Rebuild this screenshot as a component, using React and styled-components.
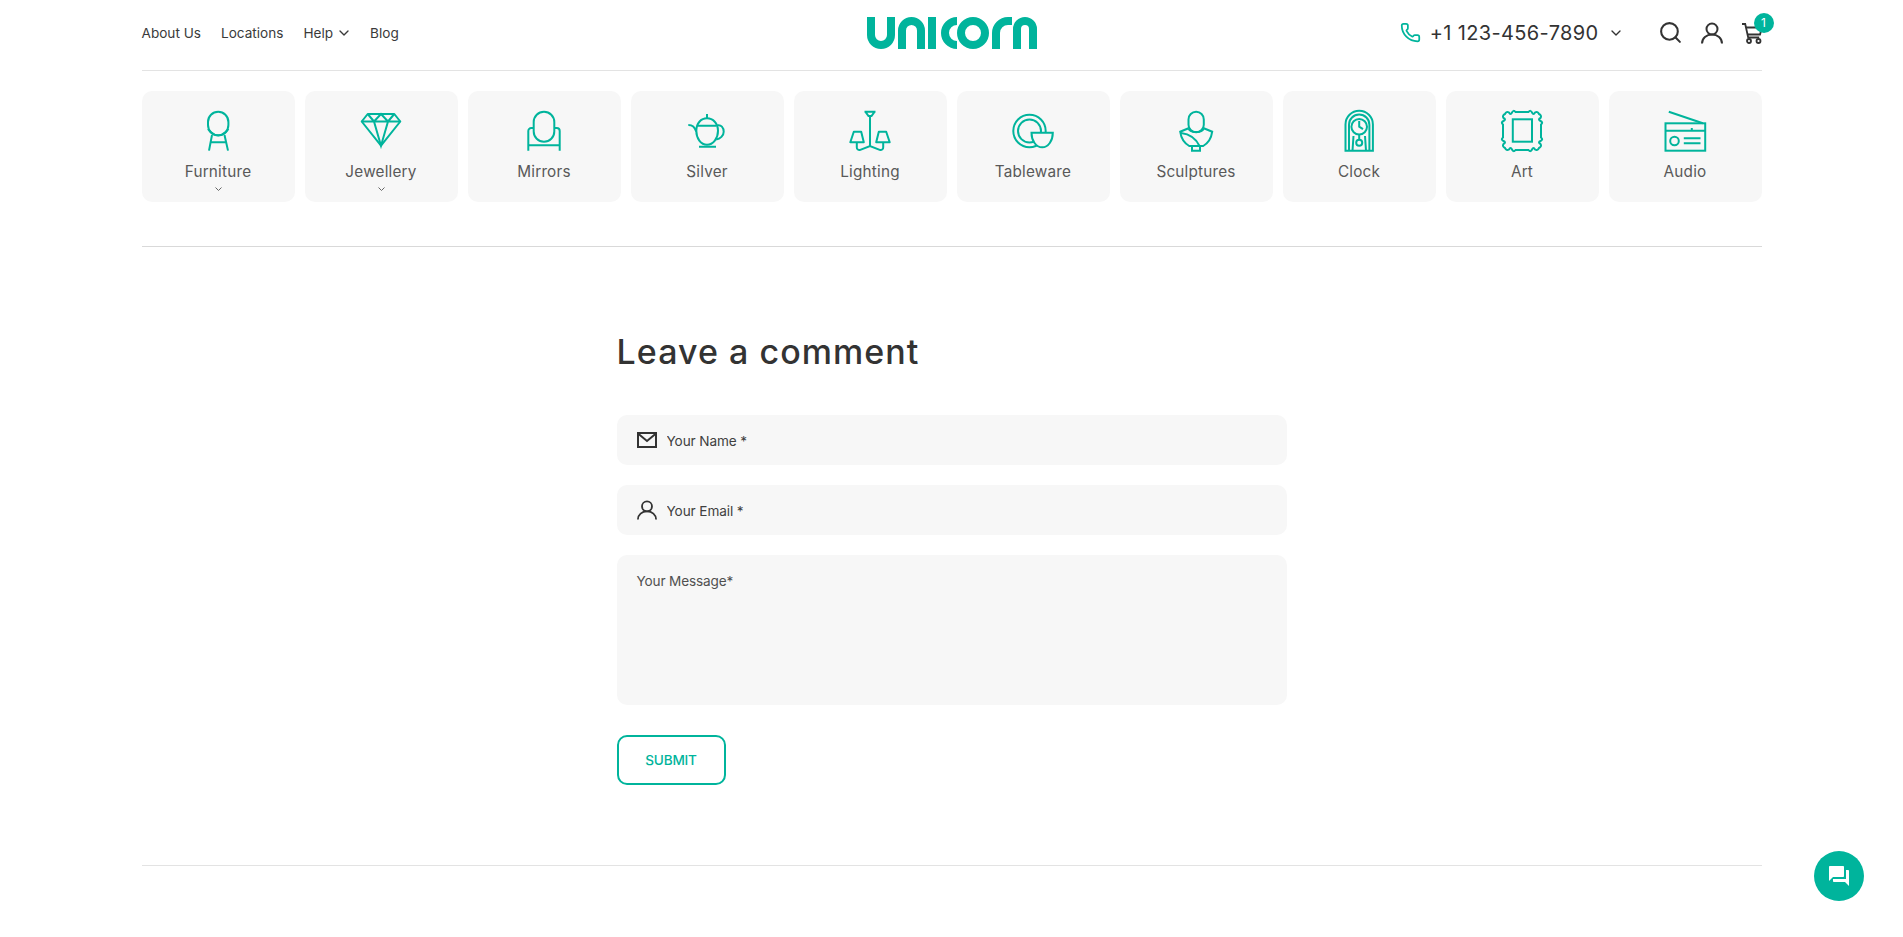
import React from "react";
import styled, { createGlobalStyle } from "styled-components";
import { Phone, Search, ChevronDown } from "lucide-react";
import { MdForum } from "react-icons/md";

const TEAL = "#00b49c";
const FONT = `Inter, "Noto Sans", "Liberation Sans", sans-serif`;

const Global = createGlobalStyle`
  html, body { margin: 0; padding: 0; background: #fff; }
  body { font-family: ${FONT}; color: #333; overflow: hidden; }
  * { box-sizing: border-box; }
`;

const Page = styled.div`
  width: 1620px;
  margin: 0 auto;
  height: 937px;
`;

const Header = styled.header`
  height: 71px;
  border-bottom: 1px solid #e3e3e3;
  display: grid;
  grid-template-columns: 1fr auto 1fr;
  align-items: center;
  padding-bottom: 5px;
`;

const Nav = styled.nav`
  display: flex;
  align-items: center;
  gap: 20px;
`;

const NavLink = styled.a`
  display: flex;
  align-items: center;
  gap: 3px;
  font-size: 13.6px;
  line-height: 20px;
  color: #3a3a3a;
  svg { margin-right: -2px; }
`;

const LogoSvg = styled.svg`
  display: block;
  width: 172px;
  height: 34px;
  fill: none;
  stroke: ${TEAL};
  stroke-width: 8;
`;

const HeaderRight = styled.div`
  display: flex;
  justify-content: flex-end;
  align-items: center;
`;

const PhoneBox = styled.div`
  display: flex;
  align-items: center;
  color: #333;
  margin-right: 34px;
`;

const PhoneNumber = styled.span`
  font-size: 20px;
  margin-left: 9px;
  margin-right: 9px;
  letter-spacing: 0.35px;
`;

const Tools = styled.div`
  display: flex;
  align-items: center;
  gap: 18px;
  color: #333;
`;

const CartWrap = styled.div`
  position: relative;
  width: 21px;
  height: 22px;
  margin-left: 1px;
  margin-right: -1px;
`;

const Badge = styled.span`
  position: absolute;
  left: 12px;
  top: -9px;
  width: 20px;
  height: 20px;
  border-radius: 50%;
  background: ${TEAL};
  color: #fff;
  font-size: 12px;
  display: flex;
  align-items: center;
  justify-content: center;
`;

const Categories = styled.div`
  display: grid;
  grid-template-columns: repeat(10, 153px);
  gap: 10px;
  padding: 20px 0 44px;
  border-bottom: 1px solid #d9d9d9;
`;

const Card = styled.a`
  height: 111px;
  background: #f7f7f7;
  border-radius: 10px;
  padding-top: 20px;
  display: flex;
  flex-direction: column;
  align-items: center;
`;

const CardIcon = styled.svg`
  display: block;
  width: 40px;
  height: 40px;
  overflow: visible;
  fill: none;
  stroke: ${TEAL};
  stroke-width: 2;
`;

const CardLabel = styled.span`
  margin-top: 11px;
  font-size: 15.3px;
  line-height: 20px;
  color: #595959;
  letter-spacing: 0.2px;
`;

const TinyChevron = styled.svg`
  display: block;
  width: 7px;
  height: 4px;
  margin-top: 5px;
  fill: none;
  stroke: #666;
  stroke-width: 1;
`;

const Main = styled.main`
  width: 670px;
  margin: 0 auto;
  padding-top: 83px;
  height: 618px;
`;

const Title = styled.h2`
  margin: 0 0 41px;
  font-size: 34px;
  line-height: 44px;
  font-weight: 500;
  color: #333;
  letter-spacing: 1.05px;
`;

const Form = styled.form`
  display: flex;
  flex-direction: column;
  gap: 20px;
`;

const Field = styled.label`
  height: 50px;
  border-radius: 10px;
  background: #f7f7f7;
  display: flex;
  align-items: center;
  padding-left: 20px;
  gap: 10px;
  color: #333;
`;

const Input = styled.input`
  flex: 1;
  border: 0;
  outline: 0;
  background: transparent;
  font-family: ${FONT};
  font-size: 13.6px;
  letter-spacing: -0.1px;
  color: #333;
  padding: 1px 0 0;
  &::placeholder { color: #404040; opacity: 1; }
`;

const Message = styled.textarea`
  height: 150px;
  border: 0;
  outline: 0;
  resize: none;
  border-radius: 10px;
  background: #f7f7f7;
  font-family: ${FONT};
  font-size: 13.6px;
  line-height: 20px;
  letter-spacing: -0.15px;
  padding: 16px 20px;
  display: block;
  &::placeholder { color: #505050; opacity: 1; }
`;

const Submit = styled.button`
  width: 109px;
  height: 50px;
  margin-top: 10px;
  border: 2px solid ${TEAL};
  border-radius: 10px;
  background: #fff;
  color: ${TEAL};
  font-family: ${FONT};
  font-size: 13.6px;
  font-weight: 500;
  letter-spacing: -0.2px;
  padding: 0;
`;

const FooterLine = styled.hr`
  margin: 0;
  border: 0;
  border-top: 1px solid #e3e3e3;
`;

const ChatButton = styled.button`
  position: fixed;
  right: 39px;
  bottom: 36px;
  width: 50px;
  height: 50px;
  border: 0;
  border-radius: 50%;
  background: ${TEAL};
  color: #fff;
  display: flex;
  align-items: center;
  justify-content: center;
  padding: 0;
`;

const UserIcon = ({ size = 22 }) => (
  <svg width={size} height={size} viewBox="0 0 22 22" fill="none" stroke="currentColor" strokeWidth="2">
    <circle cx="11" cy="7" r="5.5" />
    <path d="M1 21.5C1 16 5.500 12.500 11 12.500S21 16 21 21.500" />
  </svg>
);

const CartIcon = () => (
  <svg width="21" height="22" viewBox="0 0 21 22" fill="none" stroke="currentColor" strokeWidth="1.8">
    <path d="M0 2h3.200l3 13.500h11" />
    <path d="M4 5.500h16l-2 7H5.600" />
    <circle cx="7" cy="19" r="2" />
    <circle cx="16.500" cy="19" r="2" />
  </svg>
);

const MailIcon = () => (
  <svg width="20" height="16" viewBox="0 0 20 16" fill="none" stroke="currentColor" strokeWidth="2">
    <rect x="1" y="1" width="18" height="14" />
    <path d="M1 1.500l9 7.500 9-7.500" />
  </svg>
);

const icons = {
  Furniture: (
    <>
      <rect x="10" y="0.800" width="20.400" height="23.500" rx="10.200" />
      <path d="M10 18c3 4.500 7 6.500 10.200 6.500s7.300-2 10.200-6.500" />
      <path d="M14 24l-3 15.600M26.500 24l3.500 15.600M12.800 31.300h15.400" />
    </>
  ),
  Jewellery: (
    <>
      <path d="M6.700 3h26.600l6 7.500L20 34.700.7 10.500z" strokeLinejoin="round" />
      <path d="M.7 10.500h38.600M6.700 3l6.300 7.500L20 3l7 7.500L33.300 3M13 10.500l7 24.200 7-24.200" />
    </>
  ),
  Mirrors: (
    <>
      <rect x="9.700" y="0.800" width="20.600" height="30" rx="10.300" />
      <path d="M4.300 39.700V20a3 3 0 0 1 3-3h2.400M35.700 39.700V20a3 3 0 0 0-3-3h-2.400M4.300 34.300h31.400" />
    </>
  ),
  Silver: (
    <>
      <path d="M20 7.300c-6 0-10.700 5-10.700 12.500 0 7.500 4.500 14 10.700 14s11-6.500 11-14C31 12.300 26 7.300 20 7.300z" />
      <path d="M20 7.300V3M10.500 14.700h19M12 35.700h17" />
      <path d="M30.500 14.300c3.500-.8 6.200 2.200 6.200 6.400 0 4-3.500 7.300-7.500 7.800M1.300 14c4.500 0 6 2 8 6.500" />
    </>
  ),
  Lighting: (
    <>
      <path d="M14.500 .8h11M15.500 .8l3 4.200h3l3-4.200M20 5v30" />
      <path d="M3.800 20.700h7.400l2.600 10.600H.3zM28.800 20.700h7.400l3.500 10.600H26.200z" strokeLinejoin="round" />
      <path d="M6.800 31.300v5a2.500 2.500 0 0 0 3.500 2.500l9.700-3.800 9.700 3.800a2.500 2.500 0 0 0 3.500-2.500v-5" />
    </>
  ),
  Tableware: (
    <>
      <circle cx="16.500" cy="20" r="16.200" />
      <circle cx="16.500" cy="20" r="11.500" />
      <path d="M18.500 21.700h21.300c0 8-4.500 14.600-10.600 14.600-6.200 0-10.700-6.600-10.700-14.600z" fill="#f7f7f7" />
    </>
  ),
  Sculptures: (
    <>
      <rect x="12.500" y="0.800" width="15.300" height="20.500" rx="7.600" />
      <path d="M12.500 17.300L4.200 20.700c.8 6 3.300 11 9 14.300h14c5.700-3.300 8.200-8.300 9-14.300l-8.400-3.400" />
      <path d="M12.500 17.300c2 5 13.300 5 15.300 0M5 22c8 1 15 5.500 18.500 13" />
      <path d="M16 35v4.700h8V35" />
    </>
  ),
  Clock: (
    <>
      <path d="M6.500 39.700V13.500a13.700 13.700 0 0 1 27.400 0v26.200z" />
      <path d="M10 39.700V13.700a10.200 10.200 0 0 1 20.400 0v26" />
      <circle cx="20.200" cy="15.700" r="7.800" />
      <path d="M20.200 10v5.700l3.800 2.400M20.200 23.500v5M14.500 25l-1 14.700M26 25l1 14.700" />
      <circle cx="20.200" cy="31.700" r="3" />
    </>
  ),
  Art: (
    <>
      <path d="M3 3q1.500-3 4-1.500q1.500 3 3 0q1.500-3 3.500-.5H26.500q2-2.500 3.500.5q1.500 3 3 0q2.500-1.500 4 1.500q3 1.500 1.500 4q-3 1.500 0 3q3 1.500.5 3.500V26.500q2.500 2-.5 3.500q-3 1.500 0 3q1.500 2.500-1.500 4q-1.500 3-4 1.500q-1.500-3-3 0q-1.500 3-3.500.5H13.500q-2 2.500-3.500-.5q-1.500-3-3 0q-2.500 1.500-4-1.500q-3-1.500-1.500-4q3-1.500 0-3q-3-1.500-.5-3.500V13.500q-2.500-2 .5-3.500q3-1.500 0-3q-1.500-2.500 1.500-4z" />
      <rect x="10.800" y="8.300" width="19.200" height="22.400" />
    </>
  ),
  Audio: (
    <>
      <rect x="0.500" y="12.300" width="39.700" height="27.400" />
      <path d="M3.800 .7l34 11.600M.5 19.700h39.700M26.800 17v2.700M18.800 27.300h16.700M18.800 32.300h16.700" />
      <circle cx="9.500" cy="30" r="4.300" />
    </>
  ),
};

const categories = [
  { name: "Furniture", more: true },
  { name: "Jewellery", more: true },
  { name: "Mirrors" },
  { name: "Silver" },
  { name: "Lighting" },
  { name: "Tableware" },
  { name: "Sculptures" },
  { name: "Clock" },
  { name: "Art" },
  { name: "Audio" },
];

export default function App() {
  return (
    <Page>
      <Global />
      <Header>
        <Nav>
          <NavLink>About Us</NavLink>
          <NavLink>Locations</NavLink>
          <NavLink>
            Help <ChevronDown size={16} strokeWidth={2} />
          </NavLink>
          <NavLink>Blog</NavLink>
        </Nav>
        <LogoSvg viewBox="866 17 172 34" aria-label="Unicorn">
          <path d="M871 18V36a10 10 0 0 0 20 0V18" />
          <path d="M902 50V31.500a9.500 9.500 0 0 1 19 0V50" />
          <path d="M932 50V18" />
          <path d="M957 22a12 12 0 0 0 0 24" />
          <circle cx="973" cy="34" r="12" />
          <path d="M996 50V34a12 12 0 0 1 12-12h4" />
          <path d="M1017 50V30a8 8 0 0 1 16 0V50" />
        </LogoSvg>
        <HeaderRight>
          <PhoneBox>
            <Phone size={21} color={TEAL} strokeWidth={2} />
            <PhoneNumber>+1 123-456-7890</PhoneNumber>
            <ChevronDown size={16} strokeWidth={2} />
          </PhoneBox>
          <Tools>
            <Search size={25} strokeWidth={2} />
            <UserIcon />
            <CartWrap>
              <CartIcon />
              <Badge>1</Badge>
            </CartWrap>
          </Tools>
        </HeaderRight>
      </Header>

      <Categories>
        {categories.map((c) => (
          <Card key={c.name}>
            <CardIcon viewBox="0 0 40 40">{icons[c.name]}</CardIcon>
            <CardLabel>{c.name}</CardLabel>
            {c.more && (
              <TinyChevron viewBox="0 0 7 4">
                <path d="M.5.500l3 3 3-3" />
              </TinyChevron>
            )}
          </Card>
        ))}
      </Categories>

      <Main>
        <Title>Leave a comment</Title>
        <Form>
          <Field>
            <MailIcon />
            <Input placeholder="Your Name *" />
          </Field>
          <Field>
            <UserIcon size={20} />
            <Input placeholder="Your Email *" />
          </Field>
          <Message placeholder="Your Message*" />
          <div>
            <Submit type="button">SUBMIT</Submit>
          </div>
        </Form>
      </Main>
      <FooterLine />
      <ChatButton aria-label="Chat">
        <MdForum size={24} />
      </ChatButton>
    </Page>
  );
}
